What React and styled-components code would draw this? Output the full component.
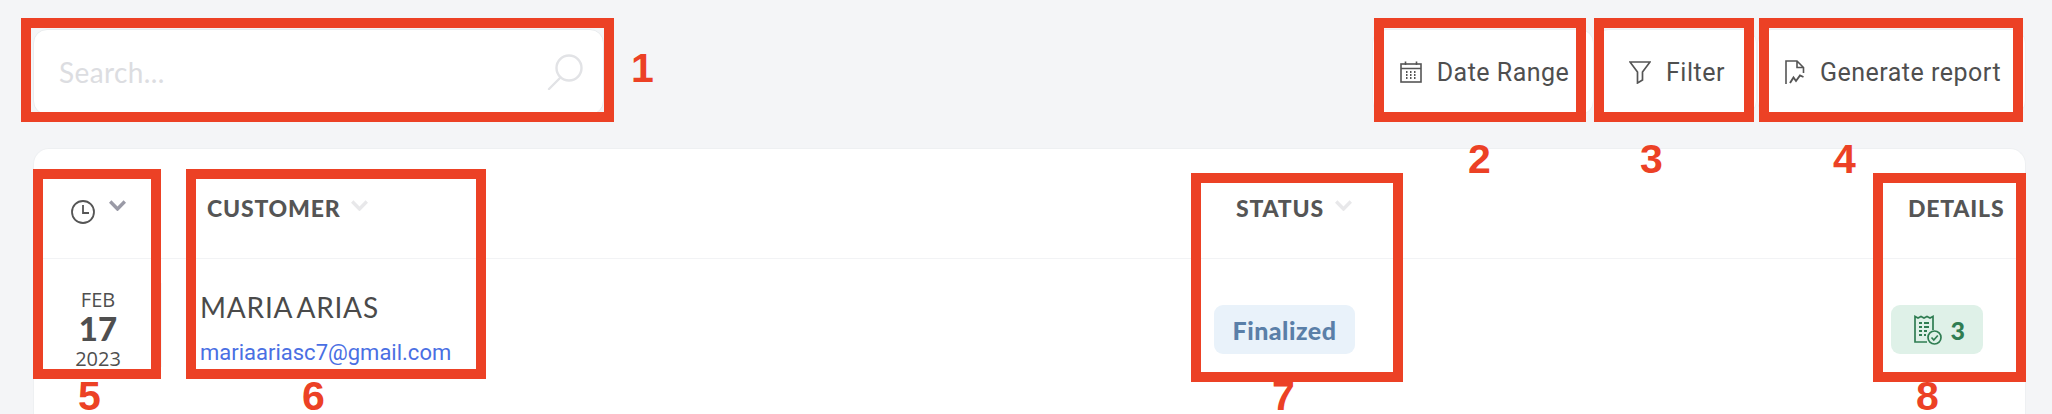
import React from "react";
import styled, { createGlobalStyle } from "styled-components";

const Global = createGlobalStyle`
  html, body { margin: 0; padding: 0; height: 414px; overflow: hidden; background: #f4f5f7; }
  #root { height: 414px; }
  * { box-sizing: border-box; }
`;

const Page = styled.div`
  position: relative;
  width: 2052px;
  height: 414px;
  overflow: hidden;
  padding: 29px 26px 0 33px;
  font-family: "Roboto", "Liberation Sans", sans-serif;
  color: #4f4f4f;
`;
const Toolbar = styled.div`
  display: flex;
  justify-content: space-between;
  height: 119px;
`;
const SearchBox = styled.div`
  width: 571px;
  height: 86px;
  display: flex;
  align-items: center;
  justify-content: space-between;
  padding: 0 20px 0 25px;
  background: #fff;
  border: 1px solid #e9ecee;
  border-radius: 14px;
`;
const Placeholder = styled.span`
  font-family: "Lato", sans-serif;
  font-size: 28px;
  letter-spacing: 0.4px;
  color: #dcdde1;
`;
const Buttons = styled.div`
  display: flex;
`;
const ToolButton = styled.div`
  width: ${(p) => p.$w}px;
  height: 86px;
  display: flex;
  align-items: center;
  justify-content: center;
  gap: 15px;
  padding-left: 3px;
  background: #fff;
  border: 1px solid #eef0f2;
  border-radius: 14px;
  font-size: 25px;
  letter-spacing: 0.5px;
  color: #4f4f4f;
`;
const Card = styled.div`
  height: 266px;
  background: #fff;
  border: 1px solid #eef0f2;
  border-bottom: 0;
  border-radius: 16px 16px 0 0;
`;
const TableGrid = styled.div`
  display: grid;
  grid-template-columns: 128px 1fr 677px 134px;
  grid-template-rows: 110px 1fr;
  height: 100%;
`;
const HeadCell = styled.div`
  display: flex;
  align-items: flex-start;
  gap: ${(p) => p.$gap || 11}px;
  padding: 48px 0 0 ${(p) => p.$pl || 0}px;
  border-bottom: 1px solid #f2f3f5;
  font-family: "Lato", sans-serif;
  font-weight: 900;
  font-size: 23px;
  line-height: 23px;
  color: #555;
  letter-spacing: 0.8px;
  & > svg { margin-top: 3px; }
`;
const DateCell = styled.div`
  position: relative;
  display: flex;
  flex-direction: column;
  align-items: center;
  padding-top: 29px;
  font-family: "Open Sans", sans-serif;
  color: #4f4f4f;
  &::after {
    content: "";
    position: absolute;
    right: 0;
    top: 24px;
    width: 1px;
    height: 84px;
    background: #f6f7f8;
  }
`;
const Month = styled.div`
  font-size: 20px;
  line-height: 23px;
`;
const Day = styled.div`
  font-family: "Lato", sans-serif;
  font-size: 33px;
  font-weight: 900;
  line-height: 34px;
`;
const Year = styled.div`
  font-size: 20px;
  line-height: 27px;
`;
const CustomerCell = styled.div`
  padding: 31px 0 0 38px;
`;
const Name = styled.div`
  font-family: "Lato", sans-serif;
  font-size: 28px;
  line-height: 34px;
  letter-spacing: 0.8px;
  color: #4a4a4a;
  word-spacing: -3px;
`;
const Email = styled.div`
  margin-top: 16px;
  font-family: "Roboto", sans-serif;
  font-size: 22px;
  line-height: 26px;
  color: #4a6fe3;
`;
const BadgeCell = styled.div`
  padding-top: 46px;
`;
const Badge = styled.div`
  display: inline-flex;
  align-items: center;
  justify-content: center;
  gap: 8px;
  width: ${(p) => p.$w}px;
  height: 49px;
  padding-left: ${(p) => p.$pl || 0}px;
  border-radius: 9px;
  background: ${(p) => p.$bg};
  color: ${(p) => p.$fg};
  font-family: "Lato", sans-serif;
  font-weight: 900;
  font-size: 25px;
  letter-spacing: 0.5px;
`;

const Mark = styled.div`
  position: absolute;
  left: ${(p) => p.$x}px;
  top: ${(p) => p.$y}px;
  width: ${(p) => p.$w}px;
  height: ${(p) => p.$h}px;
  border: 10px solid #ec4125;
`;
const Num = styled.div`
  position: absolute;
  left: ${(p) => p.$x}px;
  top: ${(p) => p.$y}px;
  font-family: "Liberation Sans", sans-serif;
  font-weight: 700;
  font-size: 41px;
  line-height: 34px;
  color: #ec4125;
`;

const marks = [
  [21, 18, 593, 104],
  [1374, 18, 212, 104],
  [1594, 18, 160, 104],
  [1759, 18, 264, 104],
  [33, 169, 128, 210],
  [186, 169, 300, 210],
  [1191, 173, 212, 209],
  [1873, 173, 153, 209],
];
const nums = [
  ["1", 631, 51],
  ["2", 1468, 142],
  ["3", 1640, 142],
  ["4", 1833, 142],
  ["5", 78, 379],
  ["6", 302, 379],
  ["7", 1272, 379],
  ["8", 1916, 379],
];

const SearchIcon = () => (
  <svg width="36" height="36" viewBox="0 0 36 36" fill="none" stroke="#e2e3e6" strokeWidth="2.4">
    <circle cx="22" cy="14" r="12.5" />
    <path d="M13 24 L2 35" strokeLinecap="round" />
  </svg>
);
const CalendarIcon = () => (
  <svg width="22" height="22" viewBox="0 0 22 22" fill="none" stroke="#555" strokeWidth="1.6">
    <rect x="1" y="3" width="20" height="18" />
    <path d="M1 7.5 H21 M5.5 0.5 V4 M16.5 0.5 V4" />
    <path d="M6 11 H7.5 M10 11 H11.5 M14 11 H15.5 M6 14 H7.5 M10 14 H11.5 M14 14 H15.5 M6 17 H7.5 M10 17 H11.5 M14 17 H15.5" strokeWidth="1.8" />
  </svg>
);
const FilterIcon = () => (
  <svg width="22" height="23" viewBox="0 0 22 23" fill="none" stroke="#555" strokeWidth="1.7">
    <path d="M1 1 H21 L13.5 11 V19 L8.5 22 V11 Z" strokeLinejoin="miter" />
  </svg>
);
const ReportIcon = () => (
  <svg width="20" height="25" viewBox="0 0 20 25" fill="none" stroke="#555" strokeWidth="1.6">
    <path d="M1 24 V1 H12 L18.5 7.5 V13 M12 1 V7.5 H18.5" />
    <path d="M5 23 L8.5 17.5 L11 21 L15 15.5 L18.5 17" strokeWidth="1.9" />
  </svg>
);
const Clock = () => (
  <svg width="24" height="24" viewBox="0 0 24 24" fill="none" stroke="#555" strokeWidth="1.8">
    <circle cx="12" cy="12" r="11" />
    <path d="M12 5 V13 H18" />
  </svg>
);
const Chevron = ({ color }) => (
  <svg width="17" height="11" viewBox="0 0 17 11" fill="none" stroke={color} strokeWidth="3.4">
    <path d="M1.2 1.5 L8.5 9 L15.8 1.5" />
  </svg>
);
const ReceiptIcon = () => (
  <svg width="28" height="30" viewBox="0 0 28 30" fill="none" stroke="#2f7d52" strokeWidth="1.7">
    <path d="M13 27 H1 V1.5 L4 3 L7 1.5 L10 3 L13 1.5 L16 3 L19 1.5 V15" />
    <path d="M5 8 H8 M10 8 H15 M5 12 H8 M10 12 H15 M5 16 H8 M10 16 H13 M5 20 H8 M10 20 H12" strokeWidth="1.8" />
    <circle cx="20.5" cy="22.5" r="6.5" fill="#dff1e8" />
    <path d="M17.5 22.5 L19.8 25 L23.8 20.5" />
  </svg>
);

export default function App() {
  return (
    <Page>
      <Global />
      <Toolbar>
        <SearchBox>
          <Placeholder>Search...</Placeholder>
          <SearchIcon />
        </SearchBox>
        <Buttons>
          <ToolButton $w={222}><CalendarIcon />Date Range</ToolButton>
          <ToolButton $w={163}><FilterIcon />Filter</ToolButton>
          <ToolButton $w={269}><ReportIcon />Generate report</ToolButton>
        </Buttons>
      </Toolbar>
      <Card>
        <TableGrid>
          <HeadCell $pl={37} $gap={14}><Clock /><Chevron color="#9a9aa6" /></HeadCell>
          <HeadCell $pl={45}>CUSTOMER<Chevron color="#e8e8ea" /></HeadCell>
          <HeadCell $pl={22}>STATUS<Chevron color="#e8e8ea" /></HeadCell>
          <HeadCell $pl={17}>DETAILS</HeadCell>
          <DateCell>
            <Month>FEB</Month>
            <Day>17</Day>
            <Year>2023</Year>
          </DateCell>
          <CustomerCell>
            <Name>MARIA ARIAS</Name>
            <Email>mariaariasc7@gmail.com</Email>
          </CustomerCell>
          <BadgeCell>
            <Badge $w={141} $bg="#e9f2fa" $fg="#5a7fa8">Finalized</Badge>
          </BadgeCell>
          <BadgeCell>
            <Badge $w={92} $pl={6} $bg="#dff1e8" $fg="#2f7d52"><ReceiptIcon />3</Badge>
          </BadgeCell>
        </TableGrid>
      </Card>
      {marks.map(([x, y, w, h]) => (
        <Mark key={`${x}-${y}`} $x={x} $y={y} $w={w} $h={h} />
      ))}
      {nums.map(([n, x, y]) => (
        <Num key={n} $x={x} $y={y}>{n}</Num>
      ))}
    </Page>
  );
}
